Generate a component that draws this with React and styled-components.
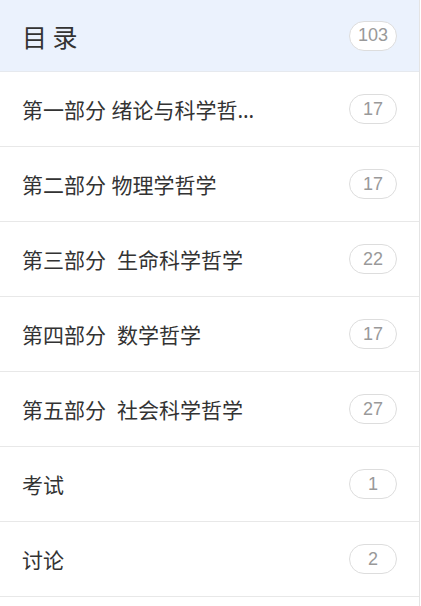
import styled, { createGlobalStyle } from "styled-components";

const GlobalStyle = createGlobalStyle`
  body {
    margin: 0;
    background: #ffffff;
    font-family: "Noto Sans CJK SC", "Noto Sans", sans-serif;
  }
`;

const chapters = [
  { name: "第一部分 绪论与科学哲学", count: 17 },
  { name: "第二部分 物理学哲学", count: 17 },
  { name: "第三部分  生命科学哲学", count: 22 },
  { name: "第四部分  数学哲学", count: 17 },
  { name: "第五部分  社会科学哲学", count: 27 },
  { name: "考试", count: 1 },
  { name: "讨论", count: 2 },
];

export default function App() {
  return (
    <>
      <GlobalStyle />
      <Catalog>
        <Header>
          <HeaderTitle>目 录</HeaderTitle>
          <Badge>103</Badge>
        </Header>
        {chapters.map((c) => (
          <Row key={c.name}>
            <Title>{c.name}</Title>
            <Badge>{c.count}</Badge>
          </Row>
        ))}
      </Catalog>
    </>
  );
}

const Catalog = styled.div`
  width: 420px;
  min-height: 606px;
  border-right: 1px solid #e4e4e4;
  box-sizing: border-box;
`;

const Header = styled.div`
  height: 72px;
  padding: 0 22px;
  box-sizing: border-box;
  display: flex;
  align-items: center;
  justify-content: space-between;

  background: #ebf2fd;
  border-bottom: 1px solid #e6e9ee;
`;

const HeaderTitle = styled.h1`
  margin: 0;
  font-size: 25px;
  font-weight: 400;
  color: #333333;
`;

const Row = styled.div`
  height: 75px;
  padding: 0 22px;
  box-sizing: border-box;
  display: flex;
  align-items: center;
  justify-content: space-between;

  border-bottom: 1px solid #e8e8e8;
`;

const Title = styled.span`
  max-width: 234px;
  overflow: hidden;
  text-overflow: ellipsis;
  white-space: pre;

  font-family: "Noto Sans", "Noto Sans CJK SC", sans-serif;
  font-size: 21px;
  color: #333333;
`;

const Badge = styled.span`
  width: 48px;
  height: 30px;
  box-sizing: border-box;
  display: flex;
  align-items: center;
  justify-content: center;

  border: 1px solid #dddddd;
  border-radius: 15px;
  background: #ffffff;

  font-family: "Liberation Sans", Arial, sans-serif;
  font-size: 18px;
  color: #999999;
`;
